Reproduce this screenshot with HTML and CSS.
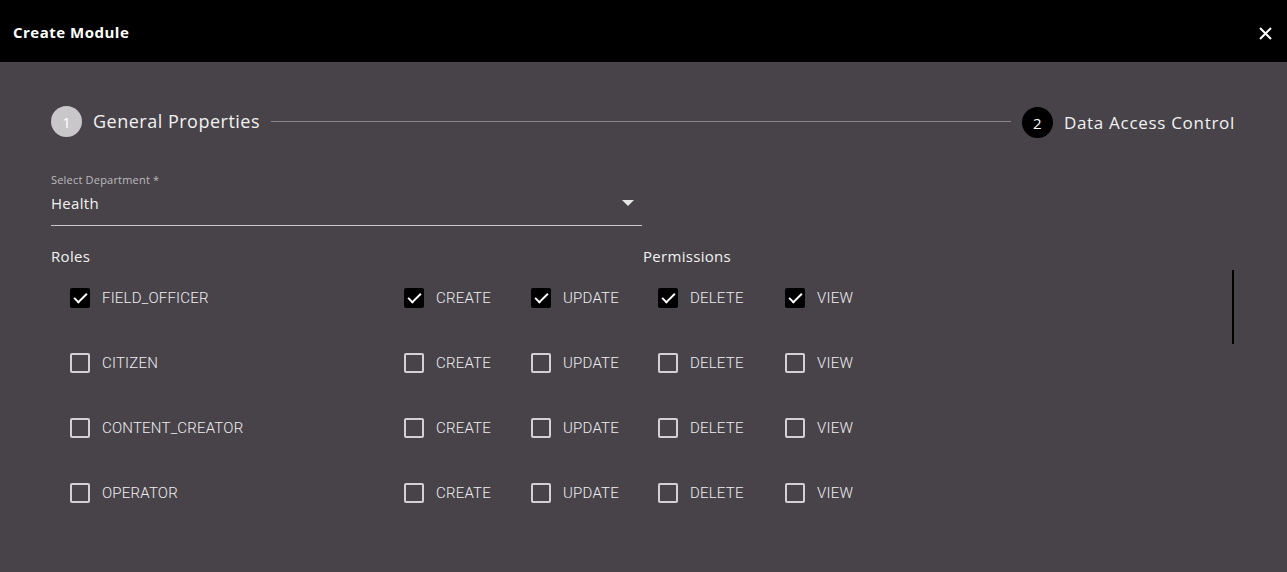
FILE: index.html
```html
<!DOCTYPE html>
<html lang="en">
<head>
    <meta charset="UTF-8">
    <title>Create Module</title>
    <link rel="stylesheet" href="styles.css">
</head>
<body>
    <div class="header">
        <h1>Create Module</h1>
        <button class="close" aria-label="Close">
            <svg width="13" height="13" viewBox="0 0 13 13"><path d="M1 1L12 12M12 1L1 12" stroke="#fff" stroke-width="2"/></svg>
        </button>
    </div>

    <div class="content">
        <div class="stepper">
            <div class="step">
                <span class="step-num done">1</span>
                <span class="step-label big">General Properties</span>
            </div>
            <div class="step-line"></div>
            <div class="step">
                <span class="step-num active">2</span>
                <span class="step-label">Data Access Control</span>
            </div>
        </div>

        <div class="field">
            <label class="field-label">Select Department *</label>
            <div class="select">
                <span>Health</span>
                <svg width="12" height="6" viewBox="0 0 12 6"><path d="M0 0H12L6 6Z" fill="#e6e6e6"/></svg>
            </div>
        </div>

        <div class="heads">
            <span class="head roles-head">Roles</span>
            <span class="head">Permissions</span>
        </div>

        <div class="grid">
            <div class="row">
                <label class="cb role"><span class="box checked"></span>FIELD_OFFICER</label>
                <label class="cb perm"><span class="box checked"></span>CREATE</label>
                <label class="cb perm"><span class="box checked"></span>UPDATE</label>
                <label class="cb perm"><span class="box checked"></span>DELETE</label>
                <label class="cb perm"><span class="box checked"></span>VIEW</label>
            </div>
            <div class="row">
                <label class="cb role"><span class="box"></span>CITIZEN</label>
                <label class="cb perm"><span class="box"></span>CREATE</label>
                <label class="cb perm"><span class="box"></span>UPDATE</label>
                <label class="cb perm"><span class="box"></span>DELETE</label>
                <label class="cb perm"><span class="box"></span>VIEW</label>
            </div>
            <div class="row">
                <label class="cb role"><span class="box"></span>CONTENT_CREATOR</label>
                <label class="cb perm"><span class="box"></span>CREATE</label>
                <label class="cb perm"><span class="box"></span>UPDATE</label>
                <label class="cb perm"><span class="box"></span>DELETE</label>
                <label class="cb perm"><span class="box"></span>VIEW</label>
            </div>
            <div class="row">
                <label class="cb role"><span class="box"></span>OPERATOR</label>
                <label class="cb perm"><span class="box"></span>CREATE</label>
                <label class="cb perm"><span class="box"></span>UPDATE</label>
                <label class="cb perm"><span class="box"></span>DELETE</label>
                <label class="cb perm"><span class="box"></span>VIEW</label>
            </div>
            <div class="scroll-thumb"></div>
        </div>
    </div>
</body>
</html>
```

FILE: styles.css
```css
:root {
    --bg: #474349;
    --text: #f2f2f2;
    --muted: #bdbabe;
    --box-border: #d3d1d4;
    --line: #8a868c;
}

body {
    margin: 0;
    height: 572px;
    overflow: hidden;
    background-color: var(--bg);
    font-family: "Open Sans", sans-serif;
    color: var(--text);
}

.header {
    height: 62px;
    background: #000;
    display: flex;
    align-items: center;
    justify-content: space-between;
    padding: 0 13px;
}

.header h1 {
    margin: 0;
    margin-top: 2px;
    font-size: 15px;
    font-weight: 700;
    color: #fff;
    letter-spacing: 0.5px;
}

.close {
    background: none;
    border: none;
    padding: 0;
    margin-top: 4px;
    margin-right: 2px;
    cursor: pointer;
    display: flex;
}

.content {
    padding: 44px 52px 0 51px;
}

.stepper {
    display: flex;
    align-items: center;
    height: 31px;
}

.step {
    display: flex;
    align-items: center;
}

.step-num {
    width: 31px;
    height: 31px;
    border-radius: 50%;
    display: flex;
    align-items: center;
    justify-content: center;
    font-size: 15px;
    color: #fff;
}

.step-num.done {
    background: #c9c7ca;
}

.step-num.active {
    background: #000;
    margin-top: 2px;
}

.step-label {
    margin-left: 11px;
    font-size: 17px;
    letter-spacing: 0.7px;
    margin-top: 2px;
}

.step-label.big {
    font-size: 18px;
    letter-spacing: 0.5px;
    margin-top: -1px;
}

.step-line {
    flex: 1;
    height: 1px;
    background: var(--line);
    margin: 0 11px 0 11px;
}

.field {
    width: 591px;
    margin-top: 35px;
}

.field-label {
    display: block;
    font-size: 11px;
    color: var(--muted);
    letter-spacing: 0.2px;
}

.select {
    display: flex;
    align-items: center;
    justify-content: space-between;
    padding: 6px 8px 12px 0;
    border-bottom: 1px solid #c9c7ca;
    font-size: 15px;
    letter-spacing: 0.3px;
}

.heads {
    display: flex;
    margin-top: 20px;
    font-size: 15px;
    letter-spacing: 0.3px;
}

.roles-head {
    width: 592px;
}

.grid {
    position: relative;
    margin-top: -1px;
    margin-left: 7px;
}

.row {
    display: flex;
    align-items: center;
    height: 65px;
    font-family: Roboto, sans-serif;
    font-weight: 300;
    font-size: 15px;
    letter-spacing: 0.2px;
    color: #f0eef1;
}

.cb {
    display: flex;
    align-items: center;
    cursor: pointer;
}

.cb.role {
    width: 334px;
}

.cb.perm {
    width: 127px;
}

.box {
    box-sizing: border-box;
    width: 20px;
    height: 20px;
    border: 2px solid var(--box-border);
    border-radius: 2px;
    margin: 0 12px 0 12px;
    position: relative;
}

.box.checked {
    background: #000;
    border-color: #000;
}

.box.checked::after {
    content: "";
    position: absolute;
    left: 5px;
    top: 0px;
    width: 5px;
    height: 11px;
    border: solid #fff;
    border-width: 0 2px 2px 0;
    transform: rotate(45deg);
}

.scroll-thumb {
    position: absolute;
    left: 1174px;
    top: 5px;
    width: 2px;
    height: 74px;
    background: #000;
}
```
